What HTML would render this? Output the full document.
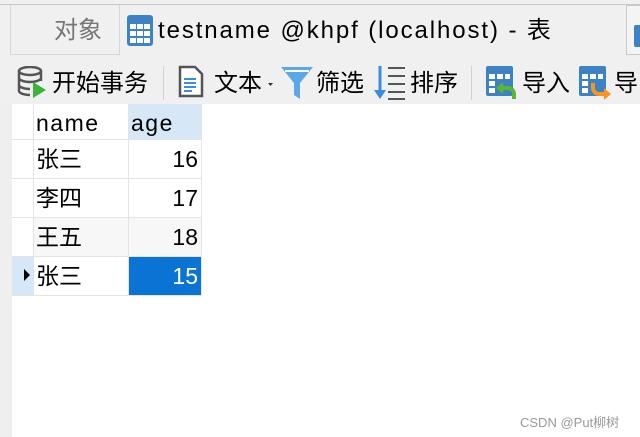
<!DOCTYPE html>
<html><head><meta charset="utf-8"><style>
*{margin:0;padding:0;box-sizing:border-box}
body{width:640px;height:437px;overflow:hidden;background:#fff;position:relative;font-family:"Liberation Sans","Noto Sans CJK SC",sans-serif;color:#000}
.a{position:absolute}
.t{font-size:24px;line-height:26px;white-space:nowrap}
.cell{position:absolute;font-size:23px;line-height:38px;white-space:nowrap}
</style></head><body>
<div class="a" style="left:0;top:0;width:640px;height:104px;background:#f0f0f0"></div>
<div class="a" style="left:0;top:4px;width:640px;height:1px;background:#c8c8c8"></div>
<div class="a" style="left:10px;top:5px;width:110px;height:50px;border:1px solid #d6d6d6;border-top:none;background:#f0f0f0"></div>
<div class="a t" style="left:54px;top:18px;color:#777">对象</div>
<svg class="a" style="left:127px;top:15px" width="27" height="32"><rect x="0" y="0" width="26" height="31" rx="3" fill="#3c82c4"/><g fill="#fff"><rect x="3" y="9" width="6" height="5"/><rect x="10" y="9" width="6" height="5"/><rect x="17" y="9" width="6" height="5"/><rect x="3" y="16" width="6" height="5"/><rect x="10" y="16" width="6" height="5"/><rect x="17" y="16" width="6" height="5"/><rect x="3" y="23" width="6" height="5"/><rect x="10" y="23" width="6" height="5"/><rect x="17" y="23" width="6" height="5"/></g></svg>
<div class="a t" style="left:158px;top:18px;letter-spacing:1.9px">testname @khpf (localhost) - 表</div>
<div class="a" style="left:626px;top:5px;width:20px;height:50px;border:1px solid #c8c8c8;background:#f4f4f4"></div>
<div class="a" style="left:634px;top:25px;width:10px;height:22px;background:#3c82c4;border-radius:2px"></div>
<!-- toolbar -->
<svg class="a" style="left:17px;top:66px" width="34" height="34"><g fill="none" stroke="#555" stroke-width="2.5"><ellipse cx="13" cy="5" rx="11" ry="4"/><path d="M2 5v20c0 2 5 4 11 4M24 5v10M2 12c0 2 5 4 11 4s11-2 11-4M2 19c0 2 5 4 11 4"/></g><path d="M16 16l13 8-13 8z" fill="#3cb43c"/></svg>
<div class="a t" style="left:52px;top:71px">开始事务</div>
<div class="a" style="left:163px;top:66px;width:1px;height:34px;background:#d0d0d0"></div>
<svg class="a" style="left:178px;top:65px" width="26" height="34"><path d="M2 2h15l7 7v22H2z" fill="#fff" stroke="#555" stroke-width="2.5"/><g stroke="#3a8ee0" stroke-width="2"><path d="M6 14h12M6 18h12M6 22h12M6 26h8"/></g></svg>
<div class="a t" style="left:214px;top:71px">文本</div>
<svg class="a" style="left:268px;top:83px" width="5" height="4"><path d="M0 0h5l-2.5 3z" fill="#333"/></svg>
<svg class="a" style="left:280px;top:65px" width="34" height="36"><path d="M1 2h32L20 18v16l-6-4V18z" fill="#5aa8e8"/><path d="M5 6h24" stroke="#fff" stroke-width="2"/></svg>
<div class="a t" style="left:316px;top:71px">筛选</div>
<svg class="a" style="left:373px;top:65px" width="36" height="36"><path d="M7 1v27" stroke="#3a8ee0" stroke-width="3"/><path d="M1 25l6 9 6-9z" fill="#3a8ee0"/><g stroke="#555" stroke-width="2"><path d="M15 3h17M15 11h17M15 19h17M15 27h17M15 34h17"/></g></svg>
<div class="a t" style="left:410px;top:71px">排序</div>
<div class="a" style="left:471px;top:66px;width:1px;height:34px;background:#d0d0d0"></div>
<svg class="a" style="left:486px;top:66px" width="34" height="34"><rect x="0" y="0" width="27" height="30" rx="2" fill="#3c82c4"/><g fill="#fff"><rect x="3" y="8" width="6" height="5"/><rect x="11" y="8" width="6" height="5"/><rect x="19" y="8" width="5" height="5"/><rect x="3" y="15" width="6" height="5"/><rect x="3" y="22" width="6" height="5"/></g><path d="M14 22h8a6 6 0 016 6v5" fill="none" stroke="#5cb82c" stroke-width="4"/><path d="M10 22l7-6v12z" fill="#5cb82c"/></svg>
<div class="a t" style="left:522px;top:71px">导入</div>
<svg class="a" style="left:579px;top:66px" width="34" height="34"><rect x="0" y="0" width="27" height="30" rx="2" fill="#3c82c4"/><g fill="#fff"><rect x="3" y="8" width="6" height="5"/><rect x="11" y="8" width="6" height="5"/><rect x="19" y="8" width="5" height="5"/><rect x="3" y="15" width="6" height="5"/><rect x="3" y="22" width="6" height="5"/></g><path d="M14 17v5a6 6 0 006 6h6" fill="none" stroke="#f7961e" stroke-width="4"/><path d="M25 22l7 6-7 6z" fill="#f7961e"/></svg>
<div class="a t" style="left:614px;top:71px">导</div>
<!-- grid -->
<div class="a" style="left:0;top:104px;width:12px;height:333px;background:#efefef"></div>
<div class="a" style="left:12px;top:104px;width:22px;height:192px;background:#fff;border-right:1px solid #e4e4e4"></div>
<div class="a" style="left:129px;top:104px;width:72px;height:36px;background:#d6e8f7"></div>
<div class="a" style="left:34px;top:217px;width:167px;height:39px;background:#f7f7f7"></div>
<div class="a" style="left:12px;top:256px;width:22px;height:39px;background:#d6e8f7"></div>
<div class="a" style="left:129px;top:256px;width:72px;height:39px;background:#0a74d4"></div>
<div class="a" style="left:128px;top:104px;width:1px;height:192px;background:#e4e4e4"></div>
<div class="a" style="left:201px;top:104px;width:1px;height:192px;background:#e4e4e4"></div>
<div class="a" style="left:12px;top:139px;width:190px;height:1px;background:#e4e4e4"></div>
<div class="a" style="left:12px;top:178px;width:190px;height:1px;background:#e4e4e4"></div>
<div class="a" style="left:12px;top:217px;width:190px;height:1px;background:#e4e4e4"></div>
<div class="a" style="left:12px;top:256px;width:190px;height:1px;background:#e4e4e4"></div>
<div class="a" style="left:12px;top:295px;width:190px;height:1px;background:#e4e4e4"></div>
<div class="cell" style="left:36px;top:104px;letter-spacing:1.5px">name</div>
<div class="cell" style="left:131px;top:104px;letter-spacing:1.5px">age</div>
<div class="cell" style="left:36px;top:140px">张三</div><div class="cell" style="left:129px;width:69px;text-align:right;top:140px">16</div>
<div class="cell" style="left:36px;top:179px">李四</div><div class="cell" style="left:129px;width:69px;text-align:right;top:179px">17</div>
<div class="cell" style="left:36px;top:218px">王五</div><div class="cell" style="left:129px;width:69px;text-align:right;top:218px">18</div>
<div class="cell" style="left:36px;top:257px">张三</div><div class="cell" style="left:129px;width:69px;text-align:right;top:257px;color:#fff">15</div>
<svg class="a" style="left:24px;top:269px" width="6" height="12"><path d="M0 0l6 6-6 6z" fill="#000"/></svg>
<div class="a" style="left:520px;top:412px;font-size:13px;color:#999;white-space:nowrap">CSDN @Put柳树</div>
</body></html>
